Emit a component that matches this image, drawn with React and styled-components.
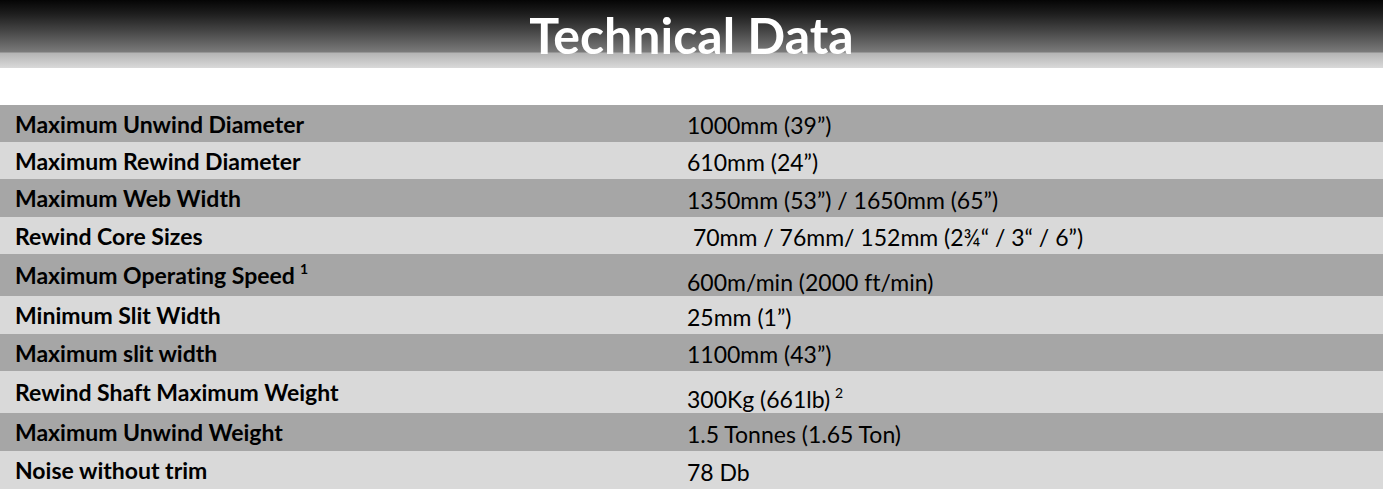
import React from 'react';
import styled, { createGlobalStyle } from 'styled-components';

const GlobalStyle = createGlobalStyle`
  html, body {
    margin: 0;
    padding: 0;
    background: #ffffff;
  }
  body {
    font-family: Lato, "Open Sans", "Liberation Sans", sans-serif;
    font-variant-ligatures: none;
    color: #000000;
  }
`;

const Page = styled.div`
  width: 1383px;
  height: 489px;
  overflow: hidden;
  display: flex;
  flex-direction: column;
`;

const Banner = styled.header`
  height: 68px;
  display: flex;
  justify-content: center;
  align-items: flex-start;
  background: linear-gradient(
    to bottom,
    #050505 0px,
    #1e1e1e 14px,
    #484848 32px,
    #7a7a7a 52px,
    #b4b4b4 53px,
    #d9d9d9 68px
  );
`;

const Title = styled.h1`
  margin: 0;
  padding-top: 7px;
  font-family: Lato, "Open Sans", sans-serif;
  font-weight: 700;
  font-size: 50px;
  line-height: 56px;
  color: #ffffff;
`;

const Table = styled.div`
  margin-top: 37px;
  display: flex;
  flex-direction: column;
`;

const Row = styled.div`
  display: grid;
  grid-template-columns: 672px 1fr;
  align-items: center;
  height: ${(p) => p.$h}px;
  padding-left: 15px;
  background: ${(p) => (p.$dark ? '#a6a6a6' : '#d9d9d9')};
`;

const Label = styled.div`
  font-weight: 700;
  font-size: 23px;
  line-height: 26px;
  white-space: nowrap;
`;

const Value = styled.div`
  font-weight: 400;
  font-size: 23px;
  line-height: 26px;
  white-space: pre;
  padding-top: ${(p) => p.$drop || 3}px;
`;

const Sup = styled.sup`
  font-size: 14px;
  line-height: 0;
  vertical-align: 10px;
  margin-left: 5px;
`;

const rows = [
  { label: 'Maximum Unwind Diameter', value: '1000mm (39”)', h: 37 },
  { label: 'Maximum Rewind Diameter', value: '610mm (24”)', h: 37 },
  { label: 'Maximum Web Width', value: '1350mm (53”) / 1650mm (65”)', h: 38 },
  { label: 'Rewind Core Sizes', value: ' 70mm / 76mm/ 152mm (2¾“ / 3“ / 6”)', h: 37 },
  { label: 'Maximum Operating Speed', labelSup: '1', value: '600m/min (2000 ft/min)', h: 42, drop: 14 },
  { label: 'Minimum Slit Width', value: '25mm (1”)', h: 38 },
  { label: 'Maximum slit width', value: '1100mm (43”)', h: 37 },
  { label: 'Rewind Shaft Maximum Weight', value: '300Kg (661lb)', valueSup: '2', h: 42, drop: 14 },
  { label: 'Maximum Unwind Weight', value: '1.5 Tonnes (1.65 Ton)', h: 38 },
  { label: 'Noise without trim', value: '78 Db', h: 38 },
];

export default function App() {
  return (
    <>
      <GlobalStyle />
      <Page>
        <Banner>
          <Title>Technical Data</Title>
        </Banner>
        <Table>
          {rows.map((r, i) => (
            <Row key={r.label} $dark={i % 2 === 0} $h={r.h}>
              <Label>
                {r.label}
                {r.labelSup && <Sup>{r.labelSup}</Sup>}
              </Label>
              <Value $drop={r.drop}>
                {r.value}
                {r.valueSup && <Sup>{r.valueSup}</Sup>}
              </Value>
            </Row>
          ))}
        </Table>
      </Page>
    </>
  );
}
